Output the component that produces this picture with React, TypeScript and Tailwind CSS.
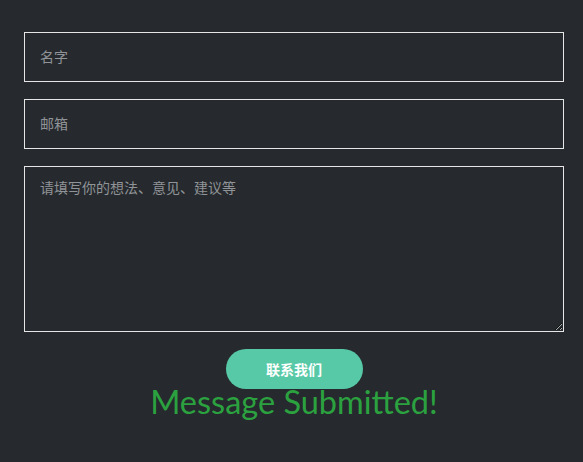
import React from "react";

export default function App() {
  return (
    <div className="min-h-[462px] w-full bg-[#262a2e] pt-[32px] font-['Noto_Sans_CJK_SC',sans-serif]">
      <div className="ml-[24px] flex w-[540px] flex-col gap-[17px]">
        <input
          placeholder="名字"
          className="h-[50px] w-full border border-[#e6e6e6] bg-transparent px-[15px] pb-[3px] text-[14px] text-white placeholder:text-[#909397] outline-none"
        />
        <input
          placeholder="邮箱"
          className="h-[50px] w-full border border-[#e6e6e6] bg-transparent px-[15px] pb-[3px] text-[14px] text-white placeholder:text-[#909397] outline-none"
        />
        <textarea
          placeholder="请填写你的想法、意见、建议等"
          className="block h-[166px] w-full border border-[#e6e6e6] bg-transparent px-[15px] pt-[10px] text-[14px] text-white placeholder:text-[#909397] outline-none"
        />
        <div className="flex flex-col items-center">
          <button className="h-[40px] w-[137px] rounded-full bg-[#57c9a6] text-[14px] font-bold text-white">
            联系我们
          </button>
          <div className="-mt-[6px] font-['Lato',sans-serif] text-[32.5px] leading-[38px] text-[#2ba23f]">
            Message Submitted!
          </div>
        </div>
      </div>
    </div>
  );
}
